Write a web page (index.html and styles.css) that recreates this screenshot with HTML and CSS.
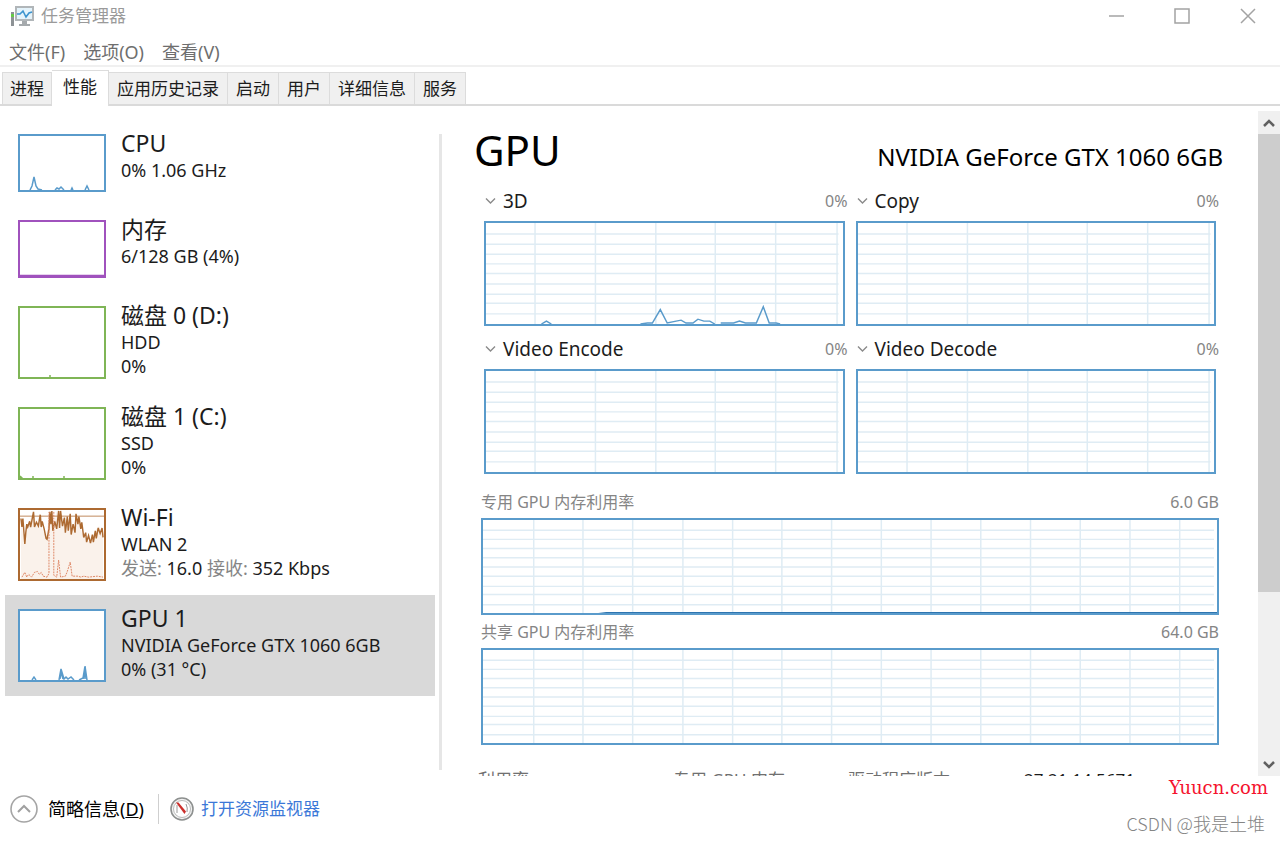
FILE: index.html
```html
<!DOCTYPE html>
<html lang="zh-CN">
<head>
<meta charset="utf-8">
<title>任务管理器</title>
<meta name="viewport" content="width=device-width, initial-scale=1">
<link rel="stylesheet" href="styles.css">
</head>
<body>
<svg class="defs" aria-hidden="true">
  <symbol id="engine-grid" viewBox="0 0 360 105" preserveAspectRatio="none">
    <path class="grid-line" d="M0 11.5H356M0 22H356M0 32.5H356M0 42.5H356M0 52.5H356M0 63.5H356M0 74H356M0 83.5H356M0 94.5H356M49.500 0V105M110.500 0V105M171.500 0V105M231.500 0V105M292.500 0V105M354.500 0V105"/>
  </symbol>
  <symbol id="memory-grid" viewBox="0 0 738 96" preserveAspectRatio="none">
    <path class="grid-line" d="M0 10.500H735M0 20H735M0 29.500H735M0 39H735M0 48.500H735M0 58H735M0 68.500H735M0 77H735M0 87.500H735M51 0V96M100.500 0V96M150.500 0V96M201 0V96M251 0V96M300.500 0V96M350.500 0V96M400.500 0V96M450.500 0V96M500.500 0V96M550.500 0V96M600.500 0V96M650.500 0V96M700.500 0V96"/>
  </symbol>
  <symbol id="chevron" viewBox="0 0 12 8">
    <path d="M1.500 1.500 6 6l4.500-4.500" fill="none" stroke="currentColor" stroke-width="1.400"/>
  </symbol>
</svg>
<div class="window">
  <header class="titlebar">
    <svg class="app-icon" width="24" height="21" viewBox="0 0 24 21" aria-hidden="true">
      <rect x="1" y="6" width="3" height="14" fill="#8d9295"/>
      <rect x="1" y="8" width="3" height="3" fill="#65c947"/>
      <rect x="6" y="1" width="17" height="13" fill="#e4f3fb" stroke="#b1b6b9" stroke-width="2"/>
      <path d="M7 8h3l3-3 3 6 3-4 3-1" fill="none" stroke="#3c94cf" stroke-width="1.600"/>
      <path d="M12 15h5v3h3v2H9v-2h3z" fill="#a5aaad"/>
    </svg>
    <h1 class="title">任务管理器</h1>
    <div class="window-buttons">
      <button class="window-button" aria-label="最小化"><svg width="16" height="16" viewBox="0 0 16 16"><path d="M1 8H16"/></svg></button>
      <button class="window-button" aria-label="最大化"><svg width="16" height="16" viewBox="0 0 16 16"><path d="M1 1H15V15H1Z"/></svg></button>
      <button class="window-button" aria-label="关闭"><svg width="16" height="16" viewBox="0 0 16 16"><path d="M1 1 15 15M15 1 1 15"/></svg></button>
    </div>
  </header>
  <nav class="menubar">
    <button class="menu">文件(F)</button>
    <button class="menu">选项(O)</button>
    <button class="menu">查看(V)</button>
  </nav>
  <div class="tabs" role="tablist">
    <button class="tab" role="tab">进程</button>
    <button class="tab tab-active" role="tab" aria-selected="true">性能</button>
    <button class="tab" role="tab">应用历史记录</button>
    <button class="tab" role="tab">启动</button>
    <button class="tab" role="tab">用户</button>
    <button class="tab" role="tab">详细信息</button>
    <button class="tab" role="tab">服务</button>
  </div>
  <main class="content">
    <aside class="sidebar">
      <button class="resource">
        <svg class="thumb thumb-blue" viewBox="0 0 84 54" preserveAspectRatio="none"><path class="trace" d="M10 54 12 50 14 41 16 50 18 53 22 54M35 54 37 52 39 53 41 51 44 54M51 54l1-2 1 2M65 54l2-4 2 4"/></svg>
        <span class="resource-text"><span class="resource-name">CPU</span><span class="resource-line">0% 1.06 GHz</span></span>
      </button>
      <button class="resource">
        <svg class="thumb thumb-purple" viewBox="0 0 84 54" preserveAspectRatio="none"><path class="trace" d="M0 53.500H84"/></svg>
        <span class="resource-text"><span class="resource-name">内存</span><span class="resource-line">6/128 GB (4%)</span></span>
      </button>
      <button class="resource resource-tall">
        <svg class="thumb thumb-green" viewBox="0 0 84 69" preserveAspectRatio="none"><path class="trace" d="M30 69v-2"/></svg>
        <span class="resource-text"><span class="resource-name">磁盘 0 (D:)</span><span class="resource-line">HDD</span><span class="resource-line">0%</span></span>
      </button>
      <button class="resource resource-tall">
        <svg class="thumb thumb-green" viewBox="0 0 84 69" preserveAspectRatio="none"><path class="trace filled" d="M0 67 2 69H0M13 69v-2M44 69v-2"/></svg>
        <span class="resource-text"><span class="resource-name">磁盘 1 (C:)</span><span class="resource-line">SSD</span><span class="resource-line">0%</span></span>
      </button>
      <button class="resource resource-tall">
        <svg class="thumb thumb-brown" viewBox="0 0 87 73" preserveAspectRatio="none">
          <path class="wifi-area" d="M1 9 5 36 8 16 14 2 17 17 20 5 22 18 27 28 31 2 34 20 38 1 41 20 46 8 48 25 52 5 55 24 59 4 64 24 69 32 73 34 78 22 82 17 86 28V73H1Z"/>
          <path class="wifi-frame" d="M0 6.500H87"/>
          <path class="trace" d="M1 9 2 18 3 9 5 36 6 24 7 15 8 18 10 12 11 18 14 2 15 18 17 13 19 17 21 5 22 18 23 12 25 20 27 30 28 31 30 20 31 2 32 15 33 1 34 22 36 12 38 20 40 1 41 19 42 1 44 17 46 8 47 24 49 7 50 22 52 4 53 26 55 15 57 24 58 4 60 15 61 7 63 20 64 13 66 29 68 24 69 34 71 27 73 35 75 26 76 34 78 22 79 30 81 19 83 25 85 19 86 29"/>
          <path class="wifi-send" d="M2 71 5 66 7 71 9 68 12 71 15 66 18 65 20 68 22 66 24 70 28 71 30 67 30 2M35 2V69L38 71 40 53 42 71 47 70 49 65 52 55 54 70 60 70 63 71 66 70 71 71 80 70 86 71"/>
        </svg>
        <span class="resource-text"><span class="resource-name">Wi-Fi</span><span class="resource-line">WLAN 2</span><span class="resource-line"><span class="muted">发送:</span> 16.0 <span class="muted">接收:</span> 352 Kbps</span></span>
      </button>
      <button class="resource resource-tall resource-selected">
        <svg class="thumb thumb-blue" viewBox="0 0 84 69" preserveAspectRatio="none"><path class="trace" d="M12 69 14 66 16 69M39 69 41 58 44 68 46 66 48 68 51 66 54 69M59 69 63 67 65 55 67 69M40 68 41 61 43 68M64 68 65 59 66 68"/></svg>
        <span class="resource-text"><span class="resource-name">GPU 1</span><span class="resource-line">NVIDIA GeForce GTX 1060 6GB</span><span class="resource-line">0% (31 °C)</span></span>
      </button>
    </aside>
    <section class="detail">
      <div class="detail-head"><h2 class="detail-title">GPU</h2><span class="detail-model">NVIDIA GeForce GTX 1060 6GB</span></div>
      <div class="engines">
        <div class="engine">
          <div class="engine-head"><button class="engine-pick"><svg class="chevron"><use href="#chevron"/></svg>3D</button><span class="value">0%</span></div>
          <svg class="chart engine-chart" viewBox="0 0 360 105" preserveAspectRatio="none"><use href="#engine-grid" width="360" height="105"/><path class="trace" d="M56 105 61 102 66 105M156 105 163 104H168L176 90 183 104 192 102 197 101 202 104H209L214 100 220 102H226L231 105M237 104H250L256 102 262 104H273L280 87 286 104H293L297 105"/></svg>
        </div>
        <div class="engine">
          <div class="engine-head"><button class="engine-pick"><svg class="chevron"><use href="#chevron"/></svg>Copy</button><span class="value">0%</span></div>
          <svg class="chart engine-chart" viewBox="0 0 360 105" preserveAspectRatio="none"><use href="#engine-grid" width="360" height="105"/></svg>
        </div>
        <div class="engine">
          <div class="engine-head"><button class="engine-pick"><svg class="chevron"><use href="#chevron"/></svg>Video Encode</button><span class="value">0%</span></div>
          <svg class="chart engine-chart" viewBox="0 0 360 105" preserveAspectRatio="none"><use href="#engine-grid" width="360" height="105"/></svg>
        </div>
        <div class="engine">
          <div class="engine-head"><button class="engine-pick"><svg class="chevron"><use href="#chevron"/></svg>Video Decode</button><span class="value">0%</span></div>
          <svg class="chart engine-chart" viewBox="0 0 360 105" preserveAspectRatio="none"><use href="#engine-grid" width="360" height="105"/></svg>
        </div>
      </div>
      <div class="memory">
        <div class="memory-head"><span>专用 GPU 内存利用率</span><span>6.0 GB</span></div>
        <svg class="chart memory-chart" viewBox="0 0 738 96" preserveAspectRatio="none"><use href="#memory-grid" width="738" height="96"/><path class="memory-trace" d="M116 97 124 96H738"/></svg>
        <div class="memory-head"><span>共享 GPU 内存利用率</span><span>64.0 GB</span></div>
        <svg class="chart memory-chart" viewBox="0 0 738 96" preserveAspectRatio="none"><use href="#memory-grid" width="738" height="96"/></svg>
      </div>
      <div class="stats"><span>利用率</span><span>专用 GPU 内存</span><span>驱动程序版本:</span><span class="stat-value">27.21.14.5671</span></div>
    </section>
    <div class="scrollbar">
      <button class="scroll-button" aria-label="向上滚动"><svg width="14" height="10" viewBox="0 0 14 10"><path d="M2 8 7 3l5 5"/></svg></button>
      <div class="scroll-track"><div class="scroll-thumb"></div></div>
      <button class="scroll-button" aria-label="向下滚动"><svg width="14" height="10" viewBox="0 0 14 10"><path d="M2 2l5 5 5-5"/></svg></button>
    </div>
  </main>
  <footer class="footer">
    <button class="brief"><svg width="30" height="30" viewBox="0 0 30 30" aria-hidden="true"><circle cx="15" cy="15" r="13" fill="#fff" stroke="#a5a5a5" stroke-width="1.600"/><path d="M9 18l6-6 6 6" fill="none" stroke="#a0a0a0" stroke-width="2"/></svg><span>简略信息<span class="access">(<u>D</u>)</span></span></button>
    <a class="monitor" href="#"><svg width="26" height="26" viewBox="0 0 26 26" aria-hidden="true"><circle cx="13" cy="13" r="11" fill="#f3f3f3" stroke="#8d908f" stroke-width="1.600"/><circle cx="13" cy="13" r="8.500" fill="#fff" stroke="#b9bbba"/><path d="M8 17V9M17 8q2 4 1 8" fill="none" stroke="#999" stroke-width="1"/><path d="M7 6.500 9.500 6.500 17 15.500 15.500 18z" fill="#cc2f2b"/></svg><span>打开资源监视器</span></a>
    <div class="credits"><span class="site">Yuucn.com</span><span class="author">CSDN @我是土堆</span></div>
  </footer>
</div>
</body>
</html>
```

FILE: styles.css
```css
* { box-sizing: border-box; }

body {
  margin: 0;
  background: #fff;
  color: #1c1c1c;
  font: 17px/24px "Noto Sans", "Noto Sans CJK SC", sans-serif;
}

button {
  margin: 0;
  padding: 0;
  border: 0;
  background: none;
  color: inherit;
  font: inherit;
  text-align: left;
}

svg { display: block; }

.defs { position: absolute; width: 0; height: 0; }

.window {
  display: flex;
  flex-direction: column;
  height: 100vh;
}

.titlebar {
  display: flex;
  align-items: center;
  flex: none;
  gap: 7px;
  height: 32px;
  padding: 0 24px 0 10px;
}
.title { margin: 0; color: #9a9a9a; font: inherit; }
.window-buttons { display: flex; gap: 50px; margin-left: auto; }
.window-button path { fill: none; stroke: #a3a3a3; stroke-width: 1.5; }

.menubar {
  display: flex;
  flex: none;
  gap: 18px;
  height: 35px;
  padding: 6px 9px;
  border-bottom: 2px solid #f0f0f0;
  color: #6e6e6e;
  font-size: 18px;
  line-height: 28px;
}

.tabs {
  display: flex;
  align-items: flex-end;
  flex: none;
  height: 39px;
  padding: 0 2px;
  border-bottom: 2px solid #dadada;
}
.tab {
  height: 32px;
  padding: 0 8px;
  border: solid #dcdcdc;
  border-width: 1px 1px 0 0;
  background: #f0f0f0;
}
.tab:first-child { padding: 0 7px; border-left-width: 1px; }
.tab-active {
  height: 36px;
  margin-bottom: -2px;
  padding: 0 11px 4px;
  background: #fff;
}

.content { display: flex; flex: 1; min-height: 0; }

.sidebar {
  flex: 0 0 442px;
  margin-bottom: 6px;
  padding: 14px 5px 0;
  background: linear-gradient(#e6e6e6, #e6e6e6) right 28px / 3px 100% no-repeat;
}
.resource {
  display: flex;
  gap: 15px;
  width: 430px;
  height: 86px;
  padding: 14px 13px;
}
.resource-tall { height: 101px; }
.resource-selected { background: #d9d9d9; }
.thumb {
  flex: none;
  width: 88px;
  height: 100%;
  border: 2px solid;
  background: #fff;
}
.thumb-blue { color: #5a9bcb; }
.thumb-purple { color: #a052bd; }
.thumb-green { color: #7fb556; }
.thumb-brown { color: #ad6a31; }
.trace { fill: none; stroke: currentColor; stroke-width: 1.5; }
.filled { fill: currentColor; }
.wifi-area { fill: #faf2eb; }
.wifi-frame { stroke: #bd8457; }
.wifi-send { fill: none; stroke: #dc8260; stroke-dasharray: 2 1; }
.resource-text { display: flex; flex-direction: column; margin-top: -6px; white-space: nowrap; }
.resource-name { font-size: 23px; line-height: 30px; }
.resource-line { font-size: 18px; line-height: 24px; }
.muted { color: #858585; }

.detail { flex: 1; min-width: 0; padding: 0 39px; overflow: hidden; }
.detail-head {
  display: flex;
  align-items: baseline;
  justify-content: space-between;
  height: 72px;
  margin: 0 -4px 0 -7px;
  padding-top: 15px;
  color: #000;
}
.detail-title { margin: 0; font-size: 42px; font-weight: 400; line-height: 58px; }
.detail-model { font-size: 24px; }

.engines {
  display: grid;
  grid-template-columns: 1fr 1fr;
  column-gap: 11px;
  padding: 0 3px;
}
.engine-head {
  display: flex;
  align-items: center;
  justify-content: space-between;
  height: 43px;
  margin-right: -3px;
  padding-top: 2px;
}
.engine-pick { display: flex; align-items: center; gap: 6px; font-size: 19px; }
.chevron { width: 13px; height: 8px; color: #8a8a8a; }
.value { color: #858585; font-size: 16px; }
.chart {
  width: 100%;
  border: 2px solid #5a9bcb;
  color: #5a9bcb;
}
.grid-line { fill: none; stroke: #dfecf4; stroke-width: 1.5; }
.engine-chart { height: 105px; }
.memory { margin-top: 11px; }
.memory-head {
  display: flex;
  justify-content: space-between;
  height: 33px;
  padding-top: 5px;
  color: #858585;
  font-size: 16px;
}
.memory-chart { height: 97px; }
.memory-trace { fill: none; stroke: #2e75b0; stroke-width: 2; }
.stats {
  display: grid;
  grid-template-columns: 195px 175px 176px 1fr;
  margin: 23px -3px 0;
  color: #707070;
  white-space: nowrap;
}
.stat-value { color: #1c1c1c; }

.scrollbar { display: flex; flex-direction: column; flex: none; width: 22px; padding-top: 5px; }
.scroll-button {
  display: grid;
  place-items: center;
  height: 23px;
  background: #f0f0f0;
}
.scroll-button path { fill: none; stroke: #606060; stroke-width: 2.5; }
.scroll-track { flex: 1; background: #f0f0f0; }
.scroll-thumb { height: 74%; background: #cdcdcd; }

.footer {
  display: flex;
  align-items: center;
  flex: none;
  height: 66px;
  padding: 0 12px 0 9px;
}
.brief, .monitor { display: flex; align-items: center; }
.brief {
  gap: 9px;
  padding-right: 14px;
  border-right: 1px solid #cfcfcf;
  color: #000;
  font-size: 18px;
}
.monitor { gap: 6px; padding-left: 10px; color: #3b78d8; text-decoration: none; }
.credits { display: flex; flex-direction: column; align-items: flex-end; gap: 11px; height: 100%; margin-left: auto; font-size: 18px; }
.site { color: #f5122d; font-family: "DejaVu Serif", serif; }
.author { margin-right: 3px; color: #858585; font-family: "Noto Sans CJK SC", sans-serif; font-weight: 300; }
```
